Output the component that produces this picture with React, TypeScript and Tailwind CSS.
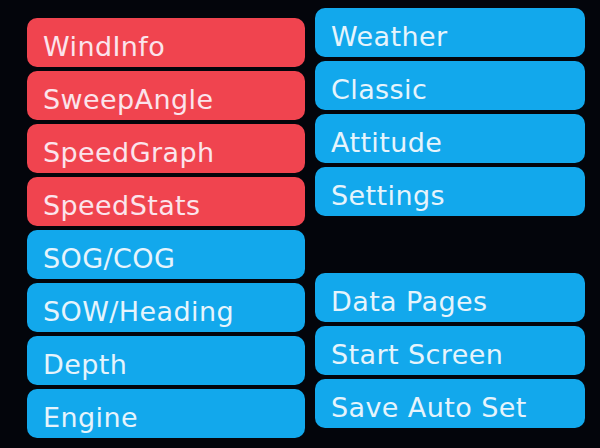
import React from "react";

const left: { label: string; red?: boolean }[] = [
  { label: "WindInfo", red: true },
  { label: "SweepAngle", red: true },
  { label: "SpeedGraph", red: true },
  { label: "SpeedStats", red: true },
  { label: "SOG/COG" },
  { label: "SOW/Heading" },
  { label: "Depth" },
  { label: "Engine" },
];

const right: (string | null)[] = [
  "Weather",
  "Classic",
  "Attitude",
  "Settings",
  null,
  "Data Pages",
  "Start Screen",
  "Save Auto Set",
];

function Btn({ label, red }: { label: string; red?: boolean }) {
  return (
    <div
      className={
        red
          ? "h-[49px] rounded-[10px] bg-[#f0444f] text-[#fbe4ec] flex items-center pl-[16px] pt-[8px] text-[27px] leading-none tracking-[0.4px]"
          : "h-[49px] rounded-[10px] bg-[#12a8ec] text-[#e6f4fc] flex items-center pl-[16px] pt-[8px] text-[27px] leading-none tracking-[0.4px]"
      }
      style={{ fontFamily: '"DejaVu Sans", sans-serif' }}
    >
      {label}
    </div>
  );
}

export default function App() {
  return (
    <div className="w-[600px] h-[448px] bg-[#03050b] overflow-hidden flex gap-[10px] pl-[27px] pt-[8px]">
      <div className="w-[278px] mt-[10px] flex flex-col gap-[4px]">
        {left.map((b) => (
          <Btn key={b.label} label={b.label} red={b.red} />
        ))}
      </div>
      <div className="w-[270px] flex flex-col gap-[4px]">
        {right.map((b, i) =>
          b ? <Btn key={b} label={b} /> : <div key={i} className="h-[49px]" />
        )}
      </div>
    </div>
  );
}
